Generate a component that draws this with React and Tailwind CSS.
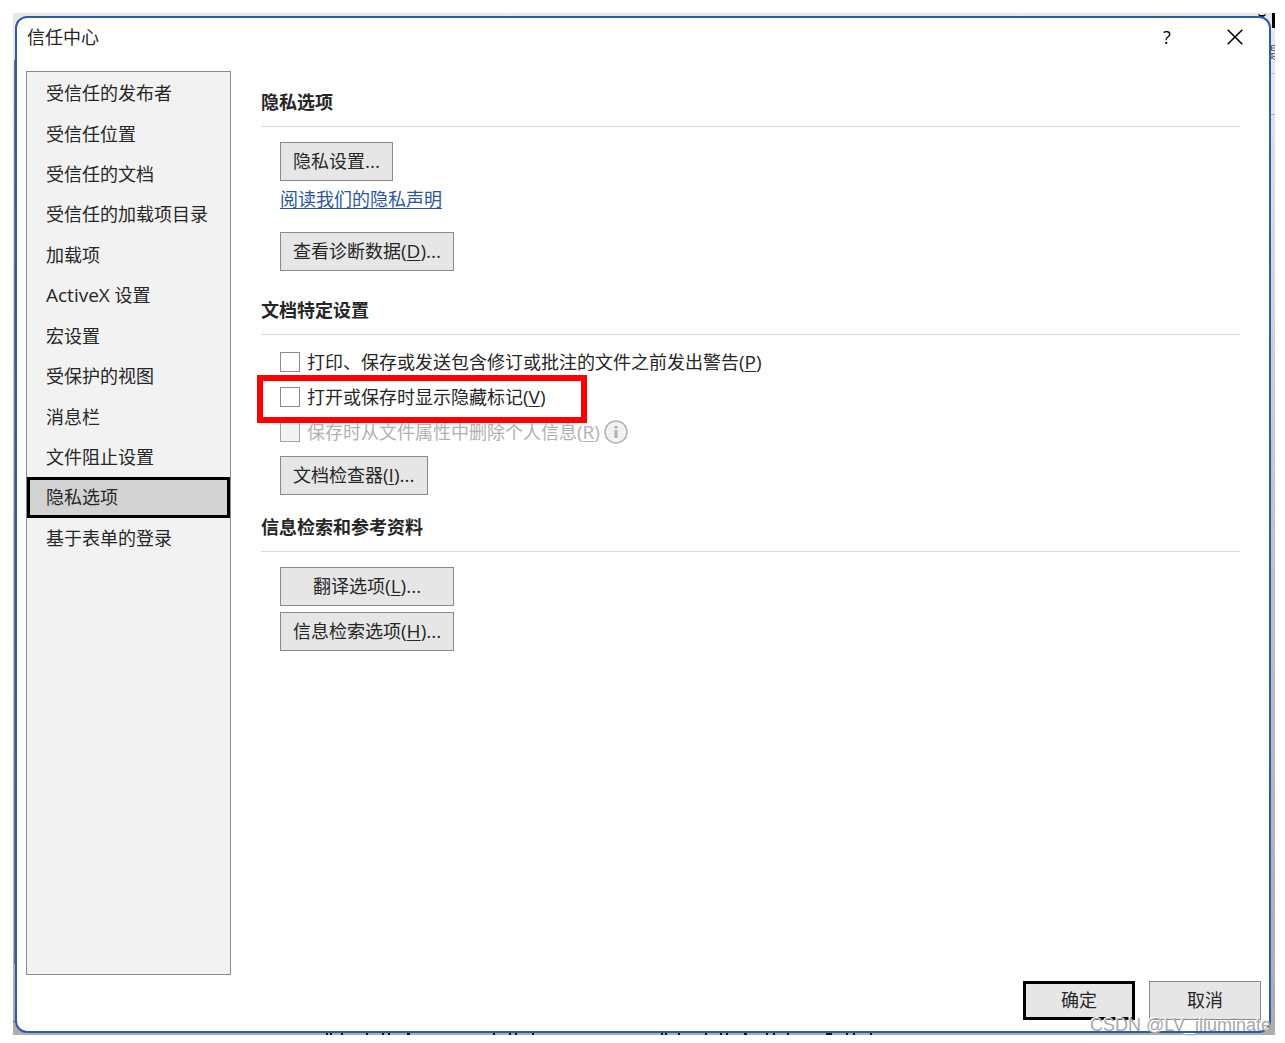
import { useState } from 'react'

const NAV_ITEMS = [
  '受信任的发布者',
  '受信任位置',
  '受信任的文档',
  '受信任的加载项目录',
  '加载项',
  'ActiveX 设置',
  '宏设置',
  '受保护的视图',
  '消息栏',
  '文件阻止设置',
  '隐私选项',
  '基于表单的登录',
]

// Underlined access key, e.g. (D)
function Key({ k, more = '' }) {
  return (
    <span className="text-[19px] leading-none">
      (<span className="underline underline-offset-2">{k}</span>){more}
    </span>
  )
}

function DialogButton({ children, className = '' }) {
  return (
    <button
      type="button"
      className={`flex h-[39px] items-center justify-center border border-[#8a8a8a] bg-[#e6e6e6] pb-px whitespace-nowrap hover:bg-[#dadada] ${className}`}
    >
      {children}
    </button>
  )
}

function Section({ title, children }) {
  return (
    <section>
      <h2 className="border-b border-[#dcdcdc] pb-2.5 leading-7 font-bold">{title}</h2>
      <div className="flex flex-col items-start pt-[15px] pl-[19px]">{children}</div>
    </section>
  )
}

function CheckRow({ id, label, k, disabled, children }) {
  return (
    <div className="relative flex h-[35px] items-center">
      <input
        id={id}
        type="checkbox"
        disabled={disabled}
        className="size-5 shrink-0 appearance-none border border-[#8a8a8a] bg-white checked:bg-[#2b579a] disabled:border-[#a3a3a3] disabled:bg-[#f3f3f3]"
      />
      <label htmlFor={id} className={`pl-[7px] whitespace-nowrap ${disabled ? 'text-[#b1b1b1]' : ''}`}>
        {label}<Key k={k} />
      </label>
      {children}
    </div>
  )
}

function Sidebar({ active, onSelect }) {
  return (
    <nav className="w-[205px] shrink-0 border border-[#8a8a8a] bg-[#f2f2f2] pt-px">
      <ul className="grid h-[485px] grid-rows-12">
        {NAV_ITEMS.map((item) => (
          <li key={item} className="flex">
            <button
              type="button"
              onClick={() => onSelect(item)}
              className={`w-full border-[3px] pl-4 text-left leading-6 ${
                active === item ? 'border-black bg-[#d2d2d2]' : 'border-transparent'
              }`}
            >
              {item.startsWith('ActiveX')
                ? <><span className="text-[19px] leading-none">ActiveX</span>{item.slice(7)}</>
                : item}
            </button>
          </li>
        ))}
      </ul>
    </nav>
  )
}

// Slivers of the document window that stay visible around the dialog
function Backdrop() {
  return (
    <div className="absolute inset-0 overflow-hidden bg-linear-to-b from-[#e9e9e9] via-[#c4c4c4] to-[#b0acac]" aria-hidden="true">
      <div className="absolute top-0 right-0 h-[101px] w-2 bg-[#e6e6e6]" />
      <div className="absolute top-[60px] right-0 h-px w-2 bg-[#c4c4c4]" />
      <div className="absolute top-[101px] right-0 h-px w-2 bg-[#b0b0b0]" />
      <div className="absolute top-0 right-0 h-[15px] w-[3px] bg-black" />
      <div className="absolute top-0 right-[9px] h-1 w-2 rounded-b-full border-b-2 border-black" />
      <div className="absolute top-[47px] bottom-[71px] left-px w-px bg-[#777777]" />
      <div className="absolute bottom-[13px] left-0 h-px w-2 bg-[#666666]" />
      <svg className="absolute top-8 right-0 h-4 w-[5px]" viewBox="0 0 5 16" fill="none" stroke="#666666">
        <path d="M5 .5H1.500v5H5M1.500 3H5M0 8.500H5M2 8.500V14M0 15l2-3 3 3M3 11.500H5" />
      </svg>
      <svg className="absolute bottom-0 left-[310px] h-[2px] w-[560px]" viewBox="0 0 560 2" stroke="#111111" strokeWidth="2">
        <path d="M3 1h2m2 0h2M18 1h2M43 1h2M59 1h2M65 1h2M84 1h3M170 1h2M186 1h2M192 1h2M209 1h2M338 1h2m2 0h2M355 1h2M382 1h2M397 1h2M403 1h2M421 1h3M443 1h2M450 1h2M464 1h2M503 1h6M523 1h2M530 1h2M547 1h2" />
      </svg>
    </div>
  )
}

export default function App() {
  const [active, setActive] = useState('隐私选项')

  return (
    <div className="flex min-h-screen bg-white pt-[13px] pr-2.5 pb-2 pl-[13px] font-['Open_Sans','Noto_Sans_CJK_SC',sans-serif] text-lg leading-6 text-[#262626]">
      <div className="relative flex min-w-0 flex-1 pt-[3px] pr-1 pb-[2px] pl-[2px]">
        <Backdrop />

        <div role="dialog" aria-label="信任中心" className="relative flex min-w-0 flex-1 flex-col rounded-xl border-2 border-[#2b5ca8] bg-white">
          <header className="flex h-[53px] shrink-0 items-start pt-[7px] pr-6 pl-2.5">
            <h1 className="flex-1">信任中心</h1>
            <button type="button" aria-label="帮助" className="w-6 text-center font-medium text-black">?</button>
            <button type="button" aria-label="关闭" className="ml-12 flex h-6 w-[18px] items-center">
              <svg className="h-4 w-4" viewBox="0 0 16 16" fill="none" stroke="#000" strokeWidth="1.500">
                <path d="M.7.7l14.600 14.600M15.300.7L.7 15.300" />
              </svg>
            </button>
          </header>

          <div className="flex min-h-0 flex-1 pr-[29px] pl-[9px]">
            <Sidebar active={active} onSelect={setActive} />

            <main className="flex min-w-0 flex-1 flex-col pt-[17px] pl-[30px]">
              <Section title="隐私选项">
                <DialogButton className="px-3"><span>隐私设置<span className="text-[19px] leading-none">...</span></span></DialogButton>
                <a href="#privacy" className="mt-1.5 mb-[21px] text-[#2b579a] underline underline-offset-2">阅读我们的隐私声明</a>
                <DialogButton className="mb-[25px] px-3"><span>查看诊断数据<Key k="D" more="..." /></span></DialogButton>
              </Section>

              <Section title="文档特定设置">
                <div className="-mt-1.5 mb-[7px]">
                  <CheckRow id="warn" label="打印、保存或发送包含修订或批注的文件之前发出警告" k="P" />
                  <CheckRow id="markup" label="打开或保存时显示隐藏标记" k="V">
                    <span className="pointer-events-none absolute -top-1 -left-[23px] z-10 h-12 w-[330px] border-[6px] border-[#ff0000]" />
                  </CheckRow>
                  <CheckRow id="remove" label="保存时从文件属性中删除个人信息" k="R" disabled>
                    <svg className="ml-1 size-6" viewBox="0 0 24 24" fill="none">
                      <circle cx="12" cy="12" r="11" fill="#f2f2f2" stroke="#b3b3b3" strokeWidth="1.500" />
                      <path d="M10.500 6h3v2.500h-3zM10.500 10h3v8h-3z" fill="#b0b0b0" />
                    </svg>
                  </CheckRow>
                </div>
                <DialogButton className="mb-[18px] px-3"><span>文档检查器<Key k="I" more="..." /></span></DialogButton>
              </Section>

              <Section title="信息检索和参考资料">
                <div className="flex flex-col gap-1.5">
                  <DialogButton className="px-3"><span>翻译选项<Key k="L" more="..." /></span></DialogButton>
                  <DialogButton className="px-3"><span>信息检索选项<Key k="H" more="..." /></span></DialogButton>
                </div>
              </Section>
            </main>
          </div>

          <footer className="flex h-14 shrink-0 items-start justify-end gap-3.5 pt-1.5 pr-2">
            <button type="button" className="flex h-[39px] w-28 items-center justify-center border-[3px] border-black bg-[#e6e6e6] pb-px">确定</button>
            <DialogButton className="w-28">取消</DialogButton>
          </footer>
        </div>

        <span className="pointer-events-none absolute right-1 bottom-0 font-['Liberation_Sans',sans-serif] text-lg leading-5 text-[#a8a8a8] [text-shadow:-1px_-1px_0_#ffffff]">
          CSDN @LV_illuminate
        </span>
      </div>
    </div>
  )
}
